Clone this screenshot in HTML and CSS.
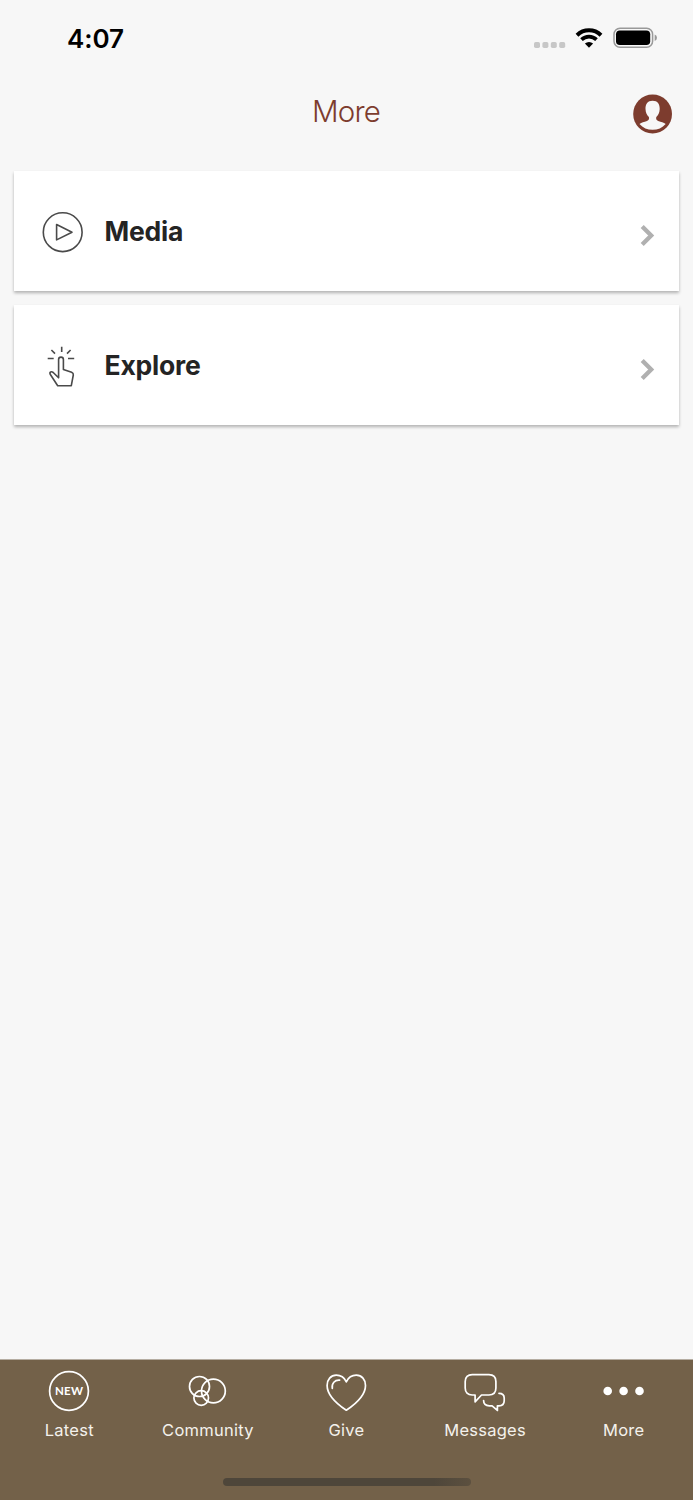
FILE: index.html
```html
<!DOCTYPE html>
<html lang="en">
<head>
  <meta charset="UTF-8" />
  <meta name="viewport" content="width=device-width, initial-scale=1.0"/>
  <title>More</title>
  <link rel="stylesheet" href="styles.css">
</head>
<body>
  <div class="status-bar">
    <span class="time">4:07</span>
    <div class="status-icons">
      <svg class="signal" width="32" height="6" viewBox="0 0 32 6">
        <rect x="0" y="0" width="6" height="6" rx="1.7"/>
        <rect x="8.4" y="0" width="6" height="6" rx="1.7"/>
        <rect x="16.8" y="0" width="6" height="6" rx="1.7"/>
        <rect x="25.2" y="0" width="6" height="6" rx="1.7"/>
      </svg>
      <svg class="wifi" width="28" height="22" viewBox="0 0 28 22">
        <path d="M2 8.2 A17.2 17.2 0 0 1 26 8.2" stroke-width="4"/>
        <path d="M6.5 12.7 A10.8 10.8 0 0 1 21.5 12.7" stroke-width="3.7"/>
        <path d="M9.9 16.6 A6.2 6.2 0 0 1 18.1 16.6 L14 20.7 Z" class="wifi-dot"/>
      </svg>
      <svg class="battery" width="45" height="22" viewBox="0 0 45 22">
        <rect x="1" y="1.3" width="38.6" height="19" rx="6" fill="none" stroke="#999" stroke-width="1.5"/>
        <rect x="3" y="3.5" width="34.2" height="14.6" rx="3.8"/>
        <path d="M41.7 7.5 Q44 8.5 44 10.8 Q44 13.1 41.7 14.1 Z" fill="#999"/>
      </svg>
    </div>
  </div>

  <header class="header">
    <h1>More</h1>
    <svg class="profile" width="40" height="40" viewBox="0 0 40 40">
      <circle cx="19.6" cy="20" r="19.4" fill="#7d3c2e"/>
      <path d="M19.6 6.8 C24.6 6.8 26.9 10.3 26.7 15 C26.5 18.9 25.3 21.2 23.3 23.1 C22.8 25 23.4 26.3 25.2 26.9 C28.2 28 30.6 28.3 32.7 30 C29.3 34 24.8 35.8 19.6 35.8 C14.4 35.8 9.9 34 6.5 30 C8.6 28.3 11 28 14 26.9 C15.8 26.3 16.4 25 15.9 23.1 C13.9 21.2 12.7 18.9 12.5 15 C12.3 10.3 14.6 6.8 19.6 6.8 Z" fill="#f7f7f7"/>
    </svg>
  </header>

  <main class="list">
    <a class="card">
      <svg class="card-icon" width="42" height="42" viewBox="0 0 42 42">
        <circle cx="20.7" cy="21.2" r="19.4"/>
        <path d="M14.6 13.5 L30 21.2 L14.6 28.9 Z"/>
      </svg>
      <span class="card-title">Media</span>
      <svg class="chevron" width="16" height="24" viewBox="0 0 16 24">
        <path d="M2.2 2.6 L11.2 11.6 L2.2 20.6"/>
      </svg>
    </a>
    <a class="card">
      <svg class="card-icon" width="42" height="42" viewBox="0 0 42 42">
        <path d="M19.7 1.7 V6.9 M9.4 5 L13 8.6 M28.6 5 L25 8.6 M5.7 13.5 H11.7 M26 13.5 H32.2"/>
        <path d="M16.6 32.8 V14.6 C16.6 11.3 21.4 11.3 21.4 14.6 V24.4 L29.6 27.2 C31 27.8 31.5 28.7 31.3 30 L29.3 40.7 H15.7 L8.2 29.2 C7.2 26.8 9.5 26.2 11.2 27.5 Z"/>
      </svg>
      <span class="card-title">Explore</span>
      <svg class="chevron" width="16" height="24" viewBox="0 0 16 24">
        <path d="M2.2 2.6 L11.2 11.6 L2.2 20.6"/>
      </svg>
    </a>
  </main>

  <nav class="tab-bar">
    <a class="tab">
      <svg width="42" height="42" viewBox="0 0 42 42">
        <circle cx="21" cy="21" r="19.4"/>
        <text class="new" x="21" y="25.1" text-anchor="middle" textLength="28">NEW</text>
      </svg>
      <span>Latest</span>
    </a>
    <a class="tab">
      <svg width="42" height="42" viewBox="0 0 42 42">
        <circle cx="12.5" cy="16.5" r="10"/>
        <circle cx="26.4" cy="21" r="11.9"/>
        <circle cx="14.2" cy="28" r="7.3"/>
      </svg>
      <span>Community</span>
    </a>
    <a class="tab">
      <svg width="42" height="42" viewBox="0 0 42 42">
        <path d="M21.3 11.8 C19 7 15.1 5.2 11.3 5.2 C5.8 5.2 2.1 9.5 2.1 15.4 C2.1 25.3 12.8 34.5 21.3 40.2 C29.8 34.5 40.5 25.3 40.5 15.4 C40.5 9.5 36.8 5.2 31.3 5.2 C27.5 5.2 23.6 7 21.3 11.8 Z"/>
        <path d="M7.3 18.4 C6.5 13.2 9.8 9.8 14.6 10.2"/>
      </svg>
      <span>Give</span>
    </a>
    <a class="tab">
      <svg width="42" height="42" viewBox="0 0 42 42">
        <path d="M8.2 4.6 H24.9 C29.3 4.6 31.9 7 31.9 11.5 V18 C31.9 22.5 29.3 25 24.9 25 H17.5 L11.1 31.8 V25 H8.2 C3.8 25 1.2 22.5 1.2 18 V11.5 C1.2 7 3.8 4.6 8.2 4.6 Z"/>
        <path d="M35 23.3 C38.5 23.3 40.2 25 40.2 28 V30.8 C40.2 34 38.3 35.8 35 35.8 H33.4 V40.4 L28.1 35.8 H25.3 C21.6 35.8 19.6 33.8 19.6 30.6"/>
      </svg>
      <span>Messages</span>
    </a>
    <a class="tab active">
      <svg width="42" height="42" viewBox="0 0 42 42">
        <circle cx="4.7" cy="21" r="4.3"/>
        <circle cx="20.6" cy="21" r="4.3"/>
        <circle cx="36.5" cy="21" r="4.3"/>
      </svg>
      <span>More</span>
    </a>
    <div class="home-indicator"></div>
  </nav>
</body>
</html>
```

FILE: styles.css
```css
* {
  box-sizing: border-box;
}
body {
  margin: 0;
  height: 1500px;
  display: flex;
  flex-direction: column;
  font-family: Inter, "Liberation Sans", sans-serif;
  background-color: #f7f7f7;
  overflow: hidden;
}
.status-bar {
  height: 76px;
  padding: 0 35px 0 67px;
  display: flex;
  align-items: center;
  justify-content: space-between;
}
.time {
  padding-top: 1px;
  font-size: 26px;
  font-weight: 600;
  line-height: 32px;
  letter-spacing: -0.1px;
  color: #000;
}
.status-icons {
  display: flex;
  align-items: center;
}
.signal {
  margin: 13px 9px 0 0;
  fill: #c7c7c7;
}
.wifi {
  margin-right: 10px;
  fill: none;
  stroke: #000;
}
.wifi-dot {
  fill: #000;
  stroke: none;
}
.header {
  height: 95px;
  padding: 18px 20px 0;
  display: grid;
  grid-template-columns: 40px 1fr 40px;
  align-items: start;
}
.header h1 {
  grid-column: 2;
  margin: 0;
  padding-right: 1px;
  font-size: 29.5px;
  font-weight: 300;
  line-height: 34px;
  letter-spacing: -0.8px;
  text-align: center;
  color: #7d3c2e;
}
.list {
  flex: 1;
  padding: 0 14px;
  display: flex;
  flex-direction: column;
  gap: 14px;
}
.card {
  height: 120px;
  padding: 1px 23px 0 28px;
  display: flex;
  align-items: center;
  background: #fff;
  box-shadow: 0 2px 3px rgba(0, 0, 0, 0.28);
}
.card-icon {
  margin-top: 1px;
  fill: none;
  stroke: #4a4a4a;
  stroke-width: 1.6;
  stroke-linejoin: round;
}
.card-title {
  flex: 1;
  padding: 0 0 2px 20.5px;
  font-size: 26.5px;
  font-weight: 700;
  letter-spacing: -0.2px;
  color: #242424;
}
.chevron {
  margin-top: 9px;
  fill: none;
  stroke: #b0b0b0;
  stroke-width: 4.3;
}
.tab-bar {
  height: 141px;
  padding-top: 10px;
  display: grid;
  grid-template-columns: repeat(5, 1fr);
  grid-template-rows: 108px auto;
  background: #736149;
  border-top: 1px solid #b5ada2;
}
.tab {
  display: flex;
  flex-direction: column;
  align-items: center;
  gap: 8px;
  font-size: 16.5px;
  line-height: 20px;
  letter-spacing: 0.25px;
  color: #f4f1ec;
}
.tab svg {
  fill: none;
  stroke: #fff;
  stroke-width: 1.7;
  stroke-linejoin: round;
  stroke-linecap: round;
}
.tab .new {
  font-family: Lato, sans-serif;
  font-size: 11.5px;
  font-weight: 700;
  letter-spacing: 0;
  fill: #fff;
  stroke: none;
}
.tab.active svg {
  fill: #fff;
  stroke: none;
}
.home-indicator {
  grid-column: 1 / -1;
  justify-self: center;
  width: 248px;
  height: 8px;
  border-radius: 4px;
  background: linear-gradient(to right, #4e463a 85%, #5c503f);
}
```
